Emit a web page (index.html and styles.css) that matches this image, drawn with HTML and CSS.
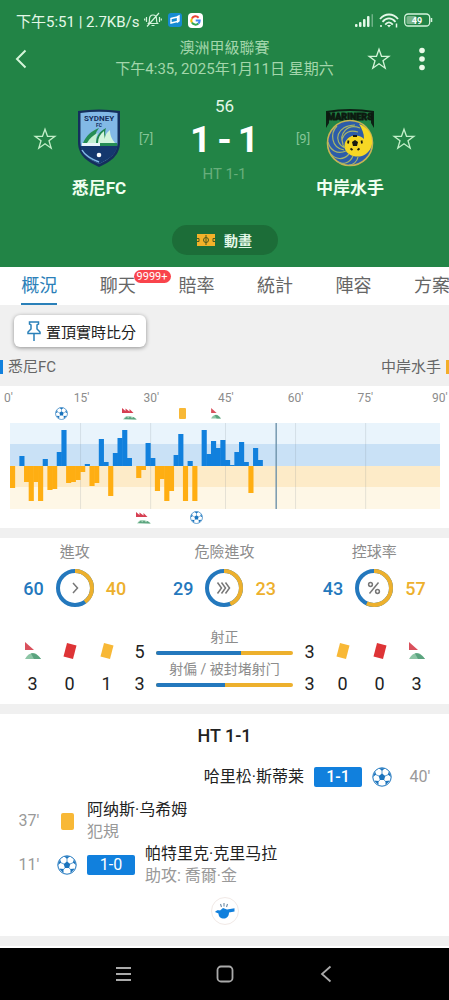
FILE: index.html
```html
<!DOCTYPE html>
<html lang="zh-Hant">
<head>
    <meta charset="UTF-8">
    <meta name="viewport" content="width=device-width, initial-scale=1.0">
    <title>悉尼FC 1 - 1 中岸水手</title>
    <link rel="stylesheet" href="styles.css">
</head>
<body>
    <!-- shared icons -->
    <svg class="sprite" aria-hidden="true">
        <symbol id="star" viewBox="0 0 24 24">
            <path d="M12 2.2l2.5 7.1h7.4l-5.9 4.5 2.2 7.4-6.2-4.4-6.2 4.4L8 13.800 2.100 9.300h7.400z" fill="none" stroke="currentColor" stroke-width="1.300"/>
        </symbol>
        <symbol id="ball" viewBox="0 0 20 20">
            <circle cx="10" cy="10" r="9.200" fill="#fff" stroke="#1b74bd" stroke-width="1"/>
            <path d="M10 6.600l3.300 2.400-1.200 3.900H7.900L6.700 9z M6.800 1.200h6.400L10 3.700z M17 4.200l2 5.800-3.200-2.400z M18 13.500l-4.600 4.700.200-4.200z M6.600 18.200L2 13.500l4.400.5z M1 10l2-5.800 1.200 3.400z" fill="#1b74bd"/>
            <path d="M10 7V3M13 9l3.300-1.400M12 12.700l2 2.300M8 12.700L6 15M7 9L3.700 7.600" stroke="#1b74bd" stroke-width=".7"/>
        </symbol>
        <symbol id="corner" viewBox="0 0 16 18">
            <path d="M0 0l9 8H0z" fill="#d9505c"/>
            <path d="M0 17c2-4 5-6 8-6s6 3 8 6z" fill="#8cc5a5"/>
            <path d="M6 11.500c4-1 7 2 10 5.500H9z" fill="#5aa37e"/>
        </symbol>
        <symbol id="corners" viewBox="0 0 30 24">
            <path d="M0 0l7 6V1l8 6V2l8 8H0z" fill="#d63f52"/>
            <path d="M2 23c3-5 6-7 10-7 7 0 14 3 18 7z" fill="#a8d5ba"/>
            <path d="M4 22l6-5 2 4 4-4 4 4 3-3 6 5z" fill="#5aa37e"/>
        </symbol>
        <symbol id="card" viewBox="0 0 14 18">
            <path d="M4 1L13.500 3.500 10 17 .5 14.500z" fill="currentColor"/>
        </symbol>
    </svg>

    <header class="header">
        <div class="status">
            <span>下午5:51 | 2.7KB/s</span>
            <svg width="18" height="16" viewBox="0 0 18 16" fill="none" stroke="#d5f3dc" stroke-width="1.200">
                <path d="M4.500 11.500c1-1 1-2 1-4.500 0-2.500 1.500-4 3.500-4s3.500 1.500 3.500 4c0 2.500 0 3.500 1 4.500zM7.500 13.500h3M3 14.500L15 1M2.500 5v5M.7 6.500v2M15.500 5v5M17.300 6.500v2"/>
            </svg>
            <svg class="app" width="14" height="14" viewBox="0 0 14 14">
                <rect width="14" height="14" rx="3" fill="#168bd2"/>
                <path d="M3 5.500L9.500 4v4.500L3 10zM9 4l2-1v5l-2 1.500" fill="none" stroke="#fff" stroke-width="1.400"/>
            </svg>
            <svg class="app" width="15" height="15" viewBox="0 0 15 15">
                <rect width="15" height="15" rx="4" fill="#fff"/>
                <g fill="none" stroke-width="2">
                    <path d="M10.600 4.700A4.200 4.200 0 0 0 3.900 5.400" stroke="#ea4335"/>
                    <path d="M3.900 5.400a4.200 4.200 0 0 0 0 4.200" stroke="#fbbc05"/>
                    <path d="M3.900 9.600a4.200 4.200 0 0 0 6.500.9" stroke="#34a853"/>
                    <path d="M10.400 10.500a4.200 4.200 0 0 0 1.300-2.900H7.700" stroke="#4285f4"/>
                </g>
            </svg>
            <span class="status-right">
                <svg width="19" height="13" viewBox="0 0 19 13" fill="#e4f8e8">
                    <rect x="0" y="10" width="2.500" height="3" rx="1"/>
                    <rect x="4" y="8" width="2.500" height="5" rx="1"/>
                    <rect x="8" y="5" width="2.500" height="8" rx="1"/>
                    <rect x="12" y="2" width="2.500" height="11" rx="1"/>
                    <rect x="16.500" y="0" width="1.500" height="13" rx=".7" opacity=".4"/>
                </svg>
                <svg width="20" height="15" viewBox="0 0 20 15" fill="none" stroke="#e4f8e8" stroke-width="1.800">
                    <path d="M1 6c5-6 13-6 18 0M3.500 8.800c4-4.600 9-4.600 13 0M6.200 11.600c2.500-3 5-3 7.600 0"/>
                    <path d="M10 14.500l-2-2.500h4z" fill="#e4f8e8" stroke="none"/>
                    <path d="M2 14v-2M17.500 14.500v-4" stroke-width="1.500"/>
                </svg>
                <svg width="29" height="14" viewBox="0 0 29 14">
                    <rect x=".7" y="1" width="25" height="12" rx="3.500" fill="none" stroke="#d5f3dc" stroke-width="1.300"/>
                    <rect x="2.500" y="3" width="10" height="8" rx="1.500" fill="#79b58b"/>
                    <path d="M27.500 5v4" stroke="#d5f3dc" stroke-width="1.500"/>
                    <text x="13" y="10.500" font-size="9" font-weight="700" text-anchor="middle" fill="#fff">49</text>
                </svg>
            </span>
        </div>

        <div class="topbar">
            <button class="icon-btn" aria-label="返回">
                <svg width="12" height="20" viewBox="0 0 12 20" fill="none" stroke="currentColor" stroke-width="2"><path d="M10.500 1.500L2 10l8.500 8.500"/></svg>
            </button>
            <div class="league">
                <div>澳洲甲級聯賽</div>
                <div>下午4:35, 2025年1月11日 星期六</div>
            </div>
            <div class="topbar-actions">
                <button class="icon-btn" aria-label="收藏"><svg width="24" height="24"><use href="#star"/></svg></button>
                <button class="icon-btn" aria-label="更多">
                    <svg width="24" height="24" viewBox="0 0 24 24" fill="#eafbe9"><circle cx="12" cy="3.500" r="2.800"/><circle cx="12" cy="12" r="2.800"/><circle cx="12" cy="20.500" r="2.800"/></svg>
                </button>
            </div>
        </div>

        <div class="match">
            <button class="icon-btn fav" aria-label="收藏悉尼FC"><svg width="24" height="24"><use href="#star"/></svg></button>
            <div class="team">
                <svg width="46" height="60" viewBox="0 0 46 60">
                    <path d="M2 3Q23 0 44 3V34C44 48 34 54 23 59 12 54 2 48 2 34z" fill="#142f5d"/>
                    <path d="M4.500 5Q23 2.500 41.500 5V34C41.500 46 33 51 23 56 13 51 4.500 46 4.500 34z" fill="#82b9e6"/>
                    <path d="M4.500 38h37C40 47 32 51.500 23 56 14 51.500 6 47 4.500 38z" fill="#15386e"/>
                    <path d="M6 42c3 6 10 9 17 12" fill="none" stroke="#82b9e6" stroke-width="1.500"/>
                    <path d="M7 35c3-7 8-12 16-15-4 5-5 10-5 15z" fill="#258d55"/>
                    <path d="M11 35c3-5 6-8 11-10-2 3-2 7-2 10z" fill="#c4efd2"/>
                    <path d="M20 36c0-8 4-13 10-16-2 5 0 11 2 16z" fill="#1e854d"/>
                    <path d="M22 35c0-5 2-9 6-12 0 5 1 8 2 12z" fill="#d2f5dc"/>
                    <path d="M29 35c-1-6 1-10 5-13 0 6 2 9 5 13z" fill="#d2f5dc"/>
                    <path d="M6 35h18v3H6z" fill="#eaf5fa"/>
                    <path d="M24 35h17v3H24z" fill="#258d55"/>
                    <circle cx="23" cy="47" r="2.300" fill="#fff"/>
                    <text x="23" y="13" font-size="8" font-weight="700" text-anchor="middle" fill="#142f5d">SYDNEY</text>
                    <text x="23" y="19" font-size="5" font-weight="700" text-anchor="middle" fill="#142f5d">FC</text>
                </svg>
                <div class="team-name">悉尼FC</div>
            </div>
            <span class="rank">[7]</span>
            <div class="score">
                <div class="minute">56</div>
                <div class="result"><span>1</span><span>-</span><span>1</span></div>
                <div class="half">HT 1-1</div>
            </div>
            <span class="rank">[9]</span>
            <div class="team">
                <svg width="50" height="60" viewBox="0 0 50 60">
                    <path d="M1 3Q25-1 49 3v2Q25 1 1 5zM1 4h3v11l-3 5zM46 4h3v16l-3-5z" fill="#0c2014"/>
                    <text x="25" y="12" font-size="9" font-weight="900" text-anchor="middle" fill="#0c1a10" stroke="#0c1a10" stroke-width=".8">MARINERS</text>
                    <circle cx="25" cy="35" r="22.500" fill="#2c5caa" stroke="#c8b452" stroke-width="1.600"/>
                    <path d="M34 16c9 3 14 11 13 20-1 6-5 10-10 12-7 2-15-1-17-7-2-7 3-13 9-13 5-1 8 1 10 3 0-6-2-10-5-15z" fill="#f6d724"/>
                    <g fill="none" stroke="#a7b569" stroke-width="1.200">
                        <path d="M20 40C13 32 20 20 33 24M20 40C7 34 12 17 30 17M19 42C6 40 5 25 12 18M21 43C12 47 5 42 3 34M24 46C18 53 10 51 6 46M28 48C25 55 18 57 13 54M33 49C32 54 28 57 24 57M18 36C14 26 22 15 35 20"/>
                    </g>
                    <circle cx="30" cy="35" r="7.500" fill="#f6d724"/>
                    <path d="M30 32l3 2-1 4h-4l-1-4z" fill="#1a1a10"/>
                    <path d="M28 28h4M23.500 32.500l-.5 3M36.500 32.500l.5 3M25.500 40.500l2 1.500M34.500 40.500l-2 1.500" stroke="#1a1a10" stroke-width="1.800"/>
                </svg>
                <div class="team-name">中岸水手</div>
            </div>
            <button class="icon-btn fav fav-away" aria-label="收藏中岸水手"><svg width="24" height="24"><use href="#star"/></svg></button>
        </div>

        <button class="animation">
            <svg width="18" height="12" viewBox="0 0 18 12">
                <rect width="18" height="12" fill="#f3b229"/>
                <g fill="none" stroke="#4d5a1e" stroke-width="1"><circle cx="9" cy="6" r="2.500"/><path d="M9 1v10M0 4.500h2v3H0M18 4.500h-2v3h2"/></g>
            </svg>
            動畫
        </button>
    </header>

    <nav class="tabs">
        <a class="tab active" href="#overview">概況</a>
        <a class="tab" href="#chat">聊天<span class="badge">9999+</span></a>
        <a class="tab" href="#odds">賠率</a>
        <a class="tab" href="#stats">統計</a>
        <a class="tab" href="#lineup">陣容</a>
        <a class="tab" href="#plans">方案</a>
    </nav>

    <main>
        <button class="pin">
            <svg width="14" height="21" viewBox="0 0 14 21" fill="none" stroke="#2a80b9" stroke-width="1.500">
                <path d="M2.500 1h9v2l-1.500 1v4l3 3v1.500H1V11l3-3V4L2.500 3zM7 12.500V20"/>
            </svg>
            置頂實時比分
        </button>

        <div class="sides">
            <span class="side home">悉尼FC</span>
            <span class="side away">中岸水手</span>
        </div>

        <section class="panel momentum">
            <div class="axis">
                <span>0'</span><span>15'</span><span>30'</span><span>45'</span><span>60'</span><span>75'</span><span>90'</span>
            </div>
            <div class="markers">
                <svg style="grid-column: 10 / span 4"><use href="#ball"/></svg>
                <svg class="wide" style="grid-column: 25 / span 3"><use href="#corners"/></svg>
                <span class="mini-card" style="grid-column: 36 / span 4"></span>
                <svg class="small" style="grid-column: 43 / span 4"><use href="#corner"/></svg>
            </div>
            <svg class="chart" id="chart" viewBox="0 0 92 86" preserveAspectRatio="none">
                <rect width="92" height="22" fill="#e9f4fc"/>
                <rect y="21" width="92" height="22" fill="#c9e1f6"/>
                <rect y="43" width="92" height="21" fill="#fdebc8"/>
                <rect y="64" width="92" height="22" fill="#fef7e6"/>
            </svg>
            <div class="markers bottom">
                <svg class="wide" style="grid-column: 28 / span 3"><use href="#corners"/></svg>
                <svg style="grid-column: 39 / span 4"><use href="#ball"/></svg>
            </div>
        </section>

        <section class="panel stats">
            <div class="rings">
                <div class="ring-stat">
                    <div class="label">進攻</div>
                    <div class="ring-row">
                        <span class="home-num">60</span>
                        <svg class="ring" viewBox="0 0 38 38">
                            <circle class="ring-home" cx="19" cy="19" r="17"/>
                            <circle class="ring-away" cx="19" cy="19" r="17" pathLength="100" stroke-dasharray="40 60"/>
                            <path d="M17 14l4.500 5-4.500 5"/>
                        </svg>
                        <span class="away-num">40</span>
                    </div>
                </div>
                <div class="ring-stat">
                    <div class="label">危險進攻</div>
                    <div class="ring-row">
                        <span class="home-num">29</span>
                        <svg class="ring" viewBox="0 0 38 38">
                            <circle class="ring-home" cx="19" cy="19" r="17"/>
                            <circle class="ring-away" cx="19" cy="19" r="17" pathLength="100" stroke-dasharray="44 56"/>
                            <path d="M12.500 13.500l4 5.500-4 5.500M16.500 13.500l4 5.500-4 5.500M20.500 13.500l4 5.500-4 5.500"/>
                        </svg>
                        <span class="away-num">23</span>
                    </div>
                </div>
                <div class="ring-stat">
                    <div class="label">控球率</div>
                    <div class="ring-row">
                        <span class="home-num">43</span>
                        <svg class="ring" viewBox="0 0 38 38">
                            <circle class="ring-home" cx="19" cy="19" r="17"/>
                            <circle class="ring-away" cx="19" cy="19" r="17" pathLength="100" stroke-dasharray="57 43"/>
                            <path d="M23.500 13.500l-9 11"/><circle cx="15.500" cy="15.500" r="1.900"/><circle cx="22.500" cy="22.500" r="1.900"/>
                        </svg>
                        <span class="away-num">57</span>
                    </div>
                </div>
            </div>

            <div class="counts">
                <div class="count"><svg width="16" height="18"><use href="#corner"/></svg><span>3</span></div>
                <div class="count red"><svg width="14" height="18"><use href="#card"/></svg><span>0</span></div>
                <div class="count yellow"><svg width="14" height="18"><use href="#card"/></svg><span>1</span></div>
                <div class="count"><span>5</span><span>3</span></div>
                <div class="shots">
                    <div class="shot-label">射正</div>
                    <div class="bar"><i style="width: 62%"></i></div>
                    <div class="shot-label">射偏 / 被封堵射门</div>
                    <div class="bar"><i style="width: 50%"></i></div>
                </div>
                <div class="count"><span>3</span><span>3</span></div>
                <div class="count yellow"><svg width="14" height="18"><use href="#card"/></svg><span>0</span></div>
                <div class="count red"><svg width="14" height="18"><use href="#card"/></svg><span>0</span></div>
                <div class="count"><svg width="16" height="18"><use href="#corner"/></svg><span>3</span></div>
            </div>
        </section>

        <section class="panel events">
            <h2>HT 1-1</h2>
            <div class="event event-away">
                <span class="time">40'</span>
                <svg class="event-icon"><use href="#ball"/></svg>
                <span class="goal goal-bold">1-1</span>
                <div class="player">哈里松·斯蒂莱</div>
            </div>
            <div class="event">
                <span class="time">37'</span>
                <span class="event-icon"><span class="booking"></span></span>
                <div class="player">阿纳斯·乌希姆<div class="note">犯規</div></div>
            </div>
            <div class="event">
                <span class="time">11'</span>
                <svg class="event-icon"><use href="#ball"/></svg>
                <span class="goal">1-0</span>
                <div class="player">帕特里克·克里马拉<div class="note">助攻: 喬爾·金</div></div>
            </div>
            <div class="whistle">
                <svg width="20" height="16" viewBox="0 0 20 16">
                    <path d="M0 9c1.500-2 3-2 5-1.500L8 5l4 1.500 7.500-1.200v3.200L14 9.500c0 3.500-2 6-5 6-3.500 0-5.500-2-5.500-5z" fill="#1180dd"/>
                    <path d="M6.500 4L5.500 1M9 3.500V0M11.500 4l1-3" stroke="#6d8aa5" stroke-width="1.100"/>
                </svg>
            </div>
        </section>
    </main>

    <footer class="navbar">
        <button class="icon-btn" aria-label="選單"><svg width="24" height="24" viewBox="0 0 24 24" fill="none" stroke="currentColor" stroke-width="1.800"><path d="M4 6h15M4 12h15M4 18h15"/></svg></button>
        <button class="icon-btn" aria-label="主頁"><svg width="24" height="24" viewBox="0 0 24 24" fill="none" stroke="currentColor" stroke-width="1.800"><rect x="4.500" y="4.500" width="15" height="15" rx="3.500"/></svg></button>
        <button class="icon-btn" aria-label="返回"><svg width="24" height="24" viewBox="0 0 24 24" fill="none" stroke="currentColor" stroke-width="1.800"><path d="M16.500 4.500L8 12l8.500 7.500"/></svg></button>
    </footer>

    <script>
        // pressure per minute, index = minute
        const home = { 2: 10, 7: 7, 10: 14, 11: 36, 16: 2, 19: 27, 20: 4, 22: 13, 23: 28, 24: 36, 25: 8,
            29: 23, 30: 8, 35: 11, 36: 32, 38: 5, 41: 36, 42: 12, 43: 25, 44: 18, 45: 26, 46: 6, 47: 1,
            48: 14, 49: 24, 50: 4, 52: 18, 53: 6 };
        const away = { 0: 22, 3: 16, 4: 35, 5: 16, 6: 35, 8: 24, 9: 23, 12: 17, 13: 16, 14: 14, 15: 6,
            17: 20, 18: 17, 21: 30, 27: 12, 28: 4, 31: 25, 32: 13, 33: 35, 34: 25, 37: 35, 39: 35, 51: 27 };
        const middle = 43;
        const chart = document.getElementById('chart');

        function addRect(x, y, width, height, color) {
            const rect = document.createElementNS('http://www.w3.org/2000/svg', 'rect');
            rect.setAttribute('x', x);
            rect.setAttribute('y', y);
            rect.setAttribute('width', width);
            rect.setAttribute('height', height);
            rect.setAttribute('fill', color);
            chart.appendChild(rect);
        }

        [15, 30, 46, 61, 76].forEach(x => addRect(x, 0, 0.2, 86, 'rgba(120, 130, 140, 0.2)'));
        for (const m in home) addRect(m, middle - home[m], 1.1, home[m], '#1180dd');
        for (const m in away) addRect(m, middle, 1.1, away[m], '#ffae12');
        addRect(56.8, 0, 0.3, 86, '#6f93ab');
    </script>
</body>
</html>
```
FILE: styles.css
```css
* {
    box-sizing: border-box;
}

body {
    margin: 0;
    min-height: 100vh;
    display: flex;
    flex-direction: column;
    overflow-x: hidden;
    font-family: Roboto, "Noto Sans CJK TC", sans-serif;
    font-size: 15px;
    color: #222;
    background: #fff;
}

svg {
    display: block;
    flex-shrink: 0;
}

button {
    font-family: inherit;
    border: none;
    cursor: pointer;
}

.sprite {
    position: absolute;
    width: 0;
    height: 0;
}

.icon-btn {
    padding: 0;
    background: none;
    color: inherit;
}

/* header */
.header {
    background: #228446;
    color: #c3efc9;
    padding-bottom: 12px;
}

.status {
    display: flex;
    align-items: center;
    height: 38px;
    padding: 2px 16px 0;
    color: #e4f8e8;
}

.status > svg {
    margin-left: 4px;
}

.status > .app {
    margin-left: 6px;
}

.status-right {
    display: flex;
    align-items: center;
    gap: 5px;
    margin-left: auto;
}

.topbar {
    display: grid;
    grid-template-columns: 1fr auto 1fr;
    align-items: center;
    padding: 0 15px;
    color: #d5f5d9;
}

.topbar > .icon-btn {
    justify-self: start;
}

.league {
    text-align: center;
    line-height: 21px;
    color: #a3d6ab;
}

.topbar-actions {
    display: flex;
    justify-content: flex-end;
    gap: 19px;
}

.match {
    display: grid;
    grid-template-columns: 30px 72px 22px 1fr 22px 72px 30px;
    align-items: start;
    padding: 16px 33px 0;
    text-align: center;
}

.fav {
    margin-top: 31px;
    justify-self: start;
}

.fav-away {
    justify-self: end;
}

.team {
    display: flex;
    flex-direction: column;
    align-items: center;
    padding-top: 12px;
}

.team-name {
    margin-top: 8px;
    font-size: 17px;
    font-weight: 700;
    line-height: 24px;
    white-space: nowrap;
    color: #f0fff0;
}

.rank {
    margin-top: 31px;
    font-size: 13px;
    line-height: 24px;
    color: #86c496;
}

.minute {
    font-size: 17px;
    line-height: 20px;
    color: #e4f8e8;
}

.result {
    display: flex;
    justify-content: center;
    gap: 6px;
    font-size: 37px;
    font-weight: 700;
    line-height: 48px;
    color: #fff;
}

.half {
    line-height: 20px;
    color: #68ae7c;
}

.animation {
    display: flex;
    align-items: center;
    justify-content: center;
    gap: 9px;
    width: 106px;
    height: 30px;
    margin: 25px auto 0;
    border-radius: 15px;
    background: #1c6d38;
    color: #e4f8e8;
    font-size: 14px;
    font-weight: 700;
}

/* tabs */
.tabs {
    display: flex;
    height: 38px;
    overflow: hidden;
    background: #fff;
}

.tab {
    position: relative;
    flex: 0 0 17.5%;
    text-align: center;
    font-size: 18px;
    line-height: 38px;
    color: #666;
    text-decoration: none;
    white-space: nowrap;
}

.tab.active {
    color: #2a80b9;
}

.tab.active::after {
    content: "";
    position: absolute;
    left: 50%;
    bottom: 0;
    width: 36px;
    height: 2px;
    margin-left: -18px;
    background: #2a80b9;
}

.badge {
    position: absolute;
    top: 3px;
    left: 55px;
    padding: 0 3px;
    border-radius: 7px;
    background: #f9444c;
    color: #fff;
    font-size: 11px;
    line-height: 13px;
}

main {
    flex: 1;
    background: #f0f0f0;
    padding-bottom: 10px;
    border-bottom: 2px solid #fff;
}

.pin {
    display: flex;
    align-items: center;
    justify-content: center;
    gap: 5px;
    width: 132px;
    height: 32px;
    margin: 10px 14px 0;
    padding: 0 0 0 3px;
    border-radius: 6px;
    background: #fff;
    box-shadow: 0 1px 4px rgba(0, 0, 0, 0.4);
    color: #222;
    font-size: 15px;
    white-space: nowrap;
}

.sides {
    display: flex;
    justify-content: space-between;
    align-items: center;
    height: 39px;
    color: #666;
}

.side {
    padding: 0 5px;
    line-height: 14px;
}

.home {
    border-left: 3px solid #1180dd;
}

.away {
    border-right: 3px solid #f3ae2a;
}

.panel {
    background: #fff;
}

.panel + .panel {
    margin-top: 10px;
}

/* momentum chart */
.momentum {
    padding: 3px 0 5px;
}

.axis {
    display: grid;
    grid-template-columns: 15fr 15fr 16fr 15fr 15fr 16fr 17px;
    padding-left: 4px;
    font-size: 12px;
    line-height: 18px;
    color: #8c8c8c;
}

.markers {
    display: grid;
    grid-template-columns: repeat(92, minmax(0, 1fr));
    justify-items: center;
    align-items: center;
    height: 12px;
    margin: 0 9px 4px 10px;
}

.markers.bottom {
    margin: 2px 9px 0 10px;
}

.markers svg {
    grid-row: 1;
    width: 13px;
    height: 13px;
}

.markers .wide {
    width: 15px;
    height: 12px;
}

.markers .small {
    width: 10px;
    height: 11px;
}

.mini-card {
    grid-row: 1;
    width: 7px;
    height: 11px;
    border-radius: 1px;
    background: #f8b836;
}

.chart {
    width: calc(100% - 19px);
    height: 86px;
    margin-left: 10px;
}

/* stats */
.stats {
    padding: 4px 0 5px;
}

.rings {
    display: grid;
    grid-template-columns: repeat(3, 1fr);
}

.label {
    text-align: center;
    line-height: 20px;
    color: #8c8c8c;
}

.ring-row {
    display: flex;
    justify-content: center;
    align-items: center;
    gap: 12px;
    margin-top: 7px;
    font-size: 18px;
    font-weight: 500;
}

.home-num {
    color: #2478bd;
}

.away-num {
    color: #edb02d;
}

.ring {
    width: 38px;
    height: 38px;
    fill: none;
    stroke: #777;
    stroke-width: 1.5;
}

.ring-home,
.ring-away {
    stroke: #2478bd;
    stroke-width: 4;
}

.ring-away {
    stroke: #edb02d;
    transform: rotate(-90deg);
    transform-origin: center;
}

.counts {
    display: grid;
    grid-template-columns: 37px 37px 37px 29px 1fr 29px 37px 37px 37px;
    margin-top: 21px;
    padding: 0 14px;
    font-size: 18px;
}

.count {
    display: grid;
    grid-template-rows: 32px 32px;
    place-items: center;
    padding-top: 7px;
}

.red svg {
    color: #de3436;
}

.yellow svg {
    color: #f8b836;
}

.shots {
    padding: 0 2px;
}

.shot-label {
    text-align: center;
    font-size: 14px;
    line-height: 18px;
    white-space: nowrap;
    color: #8c8c8c;
}

.bar {
    height: 4px;
    margin: 5px 0;
    border-radius: 2px;
    overflow: hidden;
    background: #edb02d;
}

.bar i {
    display: block;
    height: 100%;
    background: #2478bd;
}

/* events */
.events {
    padding: 10px 0 11px;
}

.events h2 {
    margin: 0 0 7px;
    text-align: center;
    font-size: 18px;
    font-weight: 500;
    line-height: 24px;
}

.event {
    display: flex;
    align-items: center;
    gap: 10px;
    min-height: 44px;
    padding: 0 11px;
    font-size: 16px;
    line-height: 22px;
}

.event-away {
    flex-direction: row-reverse;
}

.time {
    width: 36px;
    text-align: center;
    color: #999;
}

.event-icon {
    display: flex;
    justify-content: center;
    width: 20px;
    height: 20px;
}

.booking {
    width: 13px;
    height: 17px;
    margin-top: 2px;
    border-radius: 2px;
    background: #f8b836;
}

.goal {
    width: 48px;
    border-radius: 2px;
    background: #1180dd;
    color: #fff;
    text-align: center;
    line-height: 20px;
}

.goal-bold {
    font-weight: 500;
}

.note {
    color: #999;
}

.whistle {
    display: flex;
    align-items: center;
    justify-content: center;
    width: 28px;
    height: 28px;
    margin: 10px auto 0;
    border: 1px solid #f1e9e6;
    border-radius: 50%;
}

.navbar {
    display: flex;
    justify-content: center;
    align-items: center;
    gap: 77px;
    height: 52px;
    background: #000;
    color: #aaa;
}
```
